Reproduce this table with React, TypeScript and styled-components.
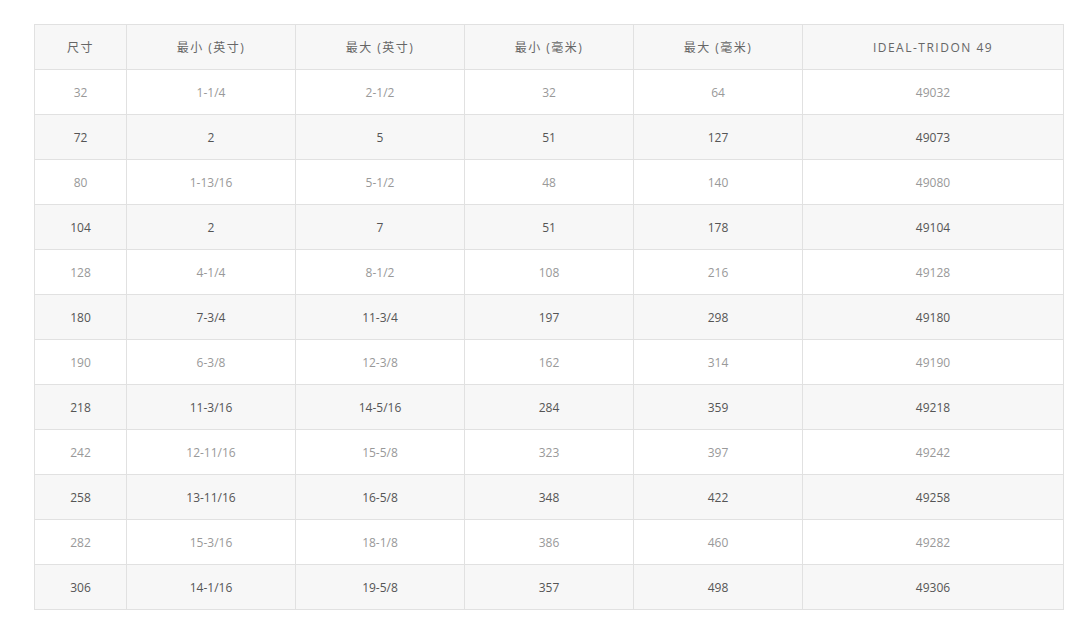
import styled, { createGlobalStyle } from "styled-components";

const GlobalStyle = createGlobalStyle`
    body {
        margin: 0;
        background: #ffffff;
        font-family: "Open Sans", "Noto Sans CJK SC", sans-serif;
    }
`;

const Page = styled.div`
    padding: 24px 0 0 34px;
`;

const Table = styled.table`
    border-collapse: collapse;
    table-layout: fixed;
    font-size: 12px;
    text-align: center;
`;

const HeadCell = styled.th<{ $w: number }>`
    width: ${(p) => p.$w}px;
    height: 44px;
    padding: 0;
    font-weight: 400;
    color: #666666;
    letter-spacing: 1.5px;
    background: #f7f7f7;
    border: 1px solid #e1e1e1;
`;

const Row = styled.tr<{ $shaded: boolean }>`
    background: ${(p) => (p.$shaded ? "#f7f7f7" : "#ffffff")};
    color: ${(p) => (p.$shaded ? "#555555" : "#999999")};
`;

const Cell = styled.td`
    height: 44px;
    padding: 0;
    border: 1px solid #e1e1e1;
`;

const columns: [string, number][] = [
    ["尺寸", 91],
    ["最小 (英寸)", 168],
    ["最大 (英寸)", 168],
    ["最小 (毫米)", 168],
    ["最大 (毫米)", 168],
    ["IDEAL-TRIDON 49", 260],
];

const rows = [
    ["32", "1-1/4", "2-1/2", "32", "64", "49032"],
    ["72", "2", "5", "51", "127", "49073"],
    ["80", "1-13/16", "5-1/2", "48", "140", "49080"],
    ["104", "2", "7", "51", "178", "49104"],
    ["128", "4-1/4", "8-1/2", "108", "216", "49128"],
    ["180", "7-3/4", "11-3/4", "197", "298", "49180"],
    ["190", "6-3/8", "12-3/8", "162", "314", "49190"],
    ["218", "11-3/16", "14-5/16", "284", "359", "49218"],
    ["242", "12-11/16", "15-5/8", "323", "397", "49242"],
    ["258", "13-11/16", "16-5/8", "348", "422", "49258"],
    ["282", "15-3/16", "18-1/8", "386", "460", "49282"],
    ["306", "14-1/16", "19-5/8", "357", "498", "49306"],
];

export default function App() {
    return (
        <Page>
            <GlobalStyle />
            <Table>
                <thead>
                    <tr>
                        {columns.map(([label, w]) => (
                            <HeadCell key={label} $w={w}>{label}</HeadCell>
                        ))}
                    </tr>
                </thead>
                <tbody>
                    {rows.map((r, i) => (
                        <Row key={r[0]} $shaded={i % 2 === 1}>
                            {r.map((v, j) => (
                                <Cell key={j}>{v}</Cell>
                            ))}
                        </Row>
                    ))}
                </tbody>
            </Table>
        </Page>
    );
}
